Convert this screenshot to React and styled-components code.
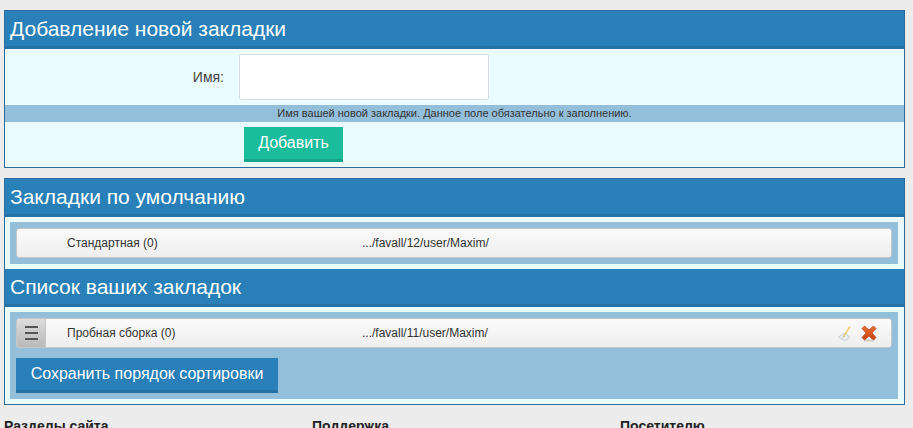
import React from "react";
import styled, { createGlobalStyle } from "styled-components";

const GlobalStyle = createGlobalStyle`
  html, body {
    margin: 0;
    height: 100%;
    overflow: hidden;
  }
  body {
    background: #ececec;
    font-family: "Liberation Sans", Arial, sans-serif;
    color: #333;
  }
`;

const defaultBookmarks = [{ name: "Стандартная (0)", url: ".../favall/12/user/Maxim/" }];
const userBookmarks = [{ name: "Пробная сборка (0)", url: ".../favall/11/user/Maxim/" }];
const footerTitles = ["Разделы сайта", "Поддержка", "Посетителю"];

const EditIcon = () => (
  <svg width="17" height="17" viewBox="0 0 17 17">
    <path d="M1.5 12 L7.5 8 L13 12 L8.5 15.5 L6 15 Z" fill="#e6ebf0" stroke="#cfcfcf" strokeWidth="1" />
    <path d="M6.5 11.5 L13 1.5" stroke="#f2cd7c" strokeWidth="1.6" />
    <path d="M6 12.5 L6.6 10.8 L7.6 11.6 Z" fill="#b9a06c" />
  </svg>
);

const DeleteIcon = () => (
  <svg width="16" height="17" viewBox="0 0 16 17">
    <defs>
      <linearGradient id="cross" x1="0" y1="0" x2="0" y2="1">
        <stop offset="0" stopColor="#e8703a" />
        <stop offset="1" stopColor="#c8410f" />
      </linearGradient>
    </defs>
    <ellipse cx="8" cy="15.5" rx="5.5" ry="1.2" fill="#d4d0cc" />
    <path
      d="M3.5 1 L8 5 L12.5 1 L15 3.5 L11 8 L15 12.5 L12.5 15 L8 11 L3.5 15 L1 12.5 L5 8 L1 3.5 Z"
      fill="url(#cross)"
      stroke="#b73c10"
      strokeWidth="0.7"
    />
  </svg>
);

const BookmarkRow = ({ item, editable }) => (
  <Row>
    <Handle $visible={editable}>{editable && <HandleBars />}</Handle>
    <RowName>{item.name}</RowName>
    <RowUrl>{item.url}</RowUrl>
    {editable && (
      <RowActions>
        <EditIcon />
        <DeleteIcon />
      </RowActions>
    )}
  </Row>
);

export default function App() {
  return (
    <Page>
      <GlobalStyle />
      <Panel>
        <PanelTitle>Добавление новой закладки</PanelTitle>
        <FormRow>
          <FieldLabel htmlFor="name">Имя:</FieldLabel>
          <TextInput id="name" type="text" />
        </FormRow>
        <Hint>Имя вашей новой закладки. Данное поле обязательно к заполнению.</Hint>
        <SubmitRow>
          <AddButton>Добавить</AddButton>
        </SubmitRow>
      </Panel>

      <Panel>
        <PanelTitle>Закладки по умолчанию</PanelTitle>
        <ListBlock>
          {defaultBookmarks.map(b => (
            <BookmarkRow key={b.url} item={b} />
          ))}
        </ListBlock>
        <PanelTitle $inner>Список ваших закладок</PanelTitle>
        <ListBlock $last>
          {userBookmarks.map(b => (
            <BookmarkRow key={b.url} item={b} editable />
          ))}
          <SaveButton>Сохранить порядок сортировки</SaveButton>
        </ListBlock>
      </Panel>

      <Footer>
        {footerTitles.map(t => (
          <FooterTitle key={t}>{t}</FooterTitle>
        ))}
      </Footer>
    </Page>
  );
}

const Page = styled.div`
  padding: 10px 8px 0 4px;
  display: flex;
  flex-direction: column;
  gap: 10px;
`;

const Panel = styled.section`
  border: 1px solid #2a6a9c;
  background: #eafbff;
`;

const PanelTitle = styled.h2`
  margin: ${props => (props.$inner ? "5px 0 0" : "0")};
  height: 35px;
  padding: 0 5px;
  background: #2980b9;
  border-bottom: 3px solid #2572a6;
  color: #fff;
  font-size: 21px;
  font-weight: 400;
  line-height: 36px;
`;

const FormRow = styled.div`
  display: flex;
  align-items: center;
  height: 46px;
  padding: 5px 0;
`;

const FieldLabel = styled.label`
  width: 219px;
  margin-right: 15px;
  text-align: right;
  font-size: 14px;
  color: #444;
`;

const TextInput = styled.input`
  box-sizing: border-box;
  width: 250px;
  height: 46px;
  border: 1px solid #d5dbe0;
  border-radius: 2px;
  background: #fff;
  outline: none;
`;

const Hint = styled.div`
  height: 17px;
  background: #93bfdb;
  text-align: center;
  font-size: 11px;
  line-height: 17px;
  color: #333;
`;

const SubmitRow = styled.div`
  padding: 5px 0 5px 239px;
  display: flex;
`;

const AddButton = styled.button`
  box-sizing: border-box;
  width: 99px;
  height: 35px;
  border: 0;
  border-bottom: 3px solid #19a487;
  background: #1abc9c;
  color: #fff;
  font-family: inherit;
  font-size: 16px;
  padding: 0;
`;

const ListBlock = styled.div`
  margin: 5px 6px ${props => (props.$last ? "5px" : "0")} 5px;
  padding: 6px;
  background: #93bfdb;
  display: flex;
  flex-direction: column;
  align-items: flex-start;
`;

const Row = styled.div`
  box-sizing: border-box;
  width: 100%;
  height: 30px;
  display: flex;
  align-items: center;
  border: 1px solid #c6c6c6;
  border-radius: 3px;
  background: linear-gradient(#fbfbfb, #eeeeee);
  font-size: 12px;
  color: #333;
`;

const Handle = styled.div`
  flex: none;
  box-sizing: border-box;
  width: 29px;
  height: 100%;
  display: flex;
  align-items: center;
  justify-content: center;
  border-radius: 2px 0 0 2px;
  background: ${props => (props.$visible ? "linear-gradient(#dcdcdc, #b9b9b9)" : "transparent")};
  border-right: 1px solid ${props => (props.$visible ? "#c6c6c6" : "transparent")};
`;

const HandleBars = styled.span`
  display: block;
  width: 13px;
  height: 10px;
  border-top: 2px solid #555;
  border-bottom: 2px solid #555;
  position: relative;
  &::after {
    content: "";
    position: absolute;
    left: 0;
    right: 0;
    top: 4px;
    height: 2px;
    background: #555;
  }
`;

const RowName = styled.span`
  margin-left: 21px;
  width: 295px;
`;

const RowUrl = styled.span`
  flex: 1;
`;

const RowActions = styled.div`
  display: flex;
  align-items: center;
  gap: 7px;
  margin-right: 14px;
`;

const SaveButton = styled.button`
  box-sizing: border-box;
  width: 262px;
  height: 35px;
  margin-top: 10px;
  border: 0;
  border-bottom: 3px solid #2572a6;
  background: #2980b9;
  color: #fff;
  font-family: inherit;
  font-size: 16px;
  padding: 0;
`;

const Footer = styled.footer`
  display: grid;
  grid-template-columns: repeat(3, 308px);
  margin-top: 3px;
`;

const FooterTitle = styled.div`
  font-size: 14px;
  font-weight: 700;
  color: #222;
`;
